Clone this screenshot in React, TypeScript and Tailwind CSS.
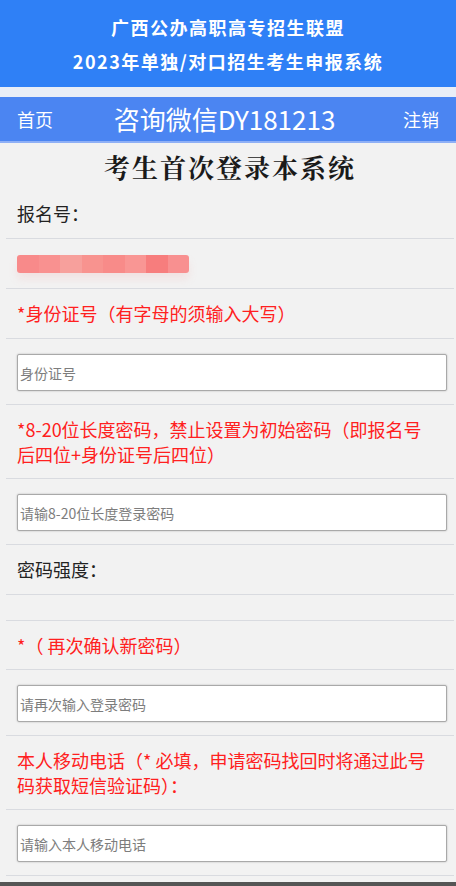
import React from 'react';

const font = { fontFamily: '"Noto Sans CJK SC", "Noto Sans", sans-serif' };

function Row({ children, className = '' }: { children?: React.ReactNode; className?: string }) {
  return <div className={`border-b border-[#d9dbe0] pl-[11px] ${className}`}>{children}</div>;
}

function Field({ placeholder }: { placeholder: string }) {
  return (
    <Row className="pr-[7px] pt-[15px] pb-[13px]">
      <input
        placeholder={placeholder}
        className="block w-full h-[37px] bg-white border border-[#a9a9a9] rounded-[2px] shadow-[0_0_2px_rgba(0,0,0,0.25)] px-[2px] text-[14px] text-[#333] placeholder:text-[#7d7d7d] outline-none"
        style={font}
      />
    </Row>
  );
}

export default function App() {
  return (
    <div className="w-[456px] h-[886px] overflow-hidden bg-[#f2f2f2] flex flex-col" style={font}>
      {/* top banner */}
      <div className="h-[87px] bg-[#2f80f6] flex flex-col items-center justify-center gap-[10px] text-white font-bold text-[18px] leading-[24px] tracking-[1.5px]">
        <div>广西公办高职高专招生联盟</div>
        <div>2023年单独/对口招生考生申报系统</div>
      </div>
      <div className="h-[10px] bg-[#e9eef7]" />
      {/* nav */}
      <div className="h-[46px] bg-[#4b85f2] border-b-2 border-[#8fb0f6] flex items-center justify-between px-[17px] text-white">
        <span className="text-[18px]">首页</span>
        <span className="text-[26px] leading-none mr-[7px]">咨询微信DY181213</span>
        <span className="text-[18px]">注销</span>
      </div>

      <div className="ml-[6px] mr-[2px] flex flex-col">
        <div className="h-[46px] flex items-center justify-center text-[26px] font-bold text-[#1a1a1a] tracking-[2px]" style={{ fontFamily: '"Noto Serif CJK SC", "Noto Sans CJK SC", serif' }}>
          考生首次登录本系统
        </div>

        <Row className="pr-[20px] py-[12px] text-[18px] leading-[25px] text-[#222]">报名号：</Row>

        <Row className="pr-[20px] py-[12px]">
          <div className="h-[25px] flex items-center">
            <div className="flex h-[18px] w-[172px] rounded-[3px] overflow-hidden shadow-[0_6px_8px_rgba(240,140,140,0.15)]">
              <div className="flex-1 bg-[#f88a8a]" />
              <div className="flex-1 bg-[#f99190]" />
              <div className="flex-1 bg-[#f7a09c]" />
              <div className="flex-1 bg-[#f8938f]" />
              <div className="flex-1 bg-[#f88b89]" />
              <div className="flex-1 bg-[#f99694]" />
              <div className="flex-1 bg-[#f77d7d]" />
              <div className="flex-1 bg-[#f89090]" />
            </div>
          </div>
        </Row>

        <Row className="pr-[20px] py-[12px] text-[18px] leading-[25px] text-[#ff2020]">*身份证号（有字母的须输入大写）</Row>
        <Field placeholder="身份证号" />

        <Row className="pr-[20px] pt-[12px] pb-[11px] text-[18px] leading-[25px] text-[#ff2020]">
          *8-20位长度密码，禁止设置为初始密码（即报名号后四位+身份证号后四位）
        </Row>
        <Field placeholder="请输8-20位长度登录密码" />

        <Row className="pr-[20px] py-[12px] text-[18px] leading-[25px] text-[#222]">密码强度：</Row>
        <Row className="h-[26px]" />

        <Row className="pr-[20px] pt-[12px] pb-[11px] text-[18px] leading-[25px] text-[#ff2020]">*（ 再次确认新密码）</Row>
        <Field placeholder="请再次输入登录密码" />

        <Row className="pr-[20px] pt-[12px] pb-[11px] text-[18px] leading-[25px] text-[#ff2020]">
          本人移动电话（* 必填，申请密码找回时将通过此号码获取短信验证码）：
        </Row>
        <Field placeholder="请输入本人移动电话" />
      </div>
      <div className="flex-1" />
      <div className="h-[4px] bg-[#555]" />
    </div>
  );
}
